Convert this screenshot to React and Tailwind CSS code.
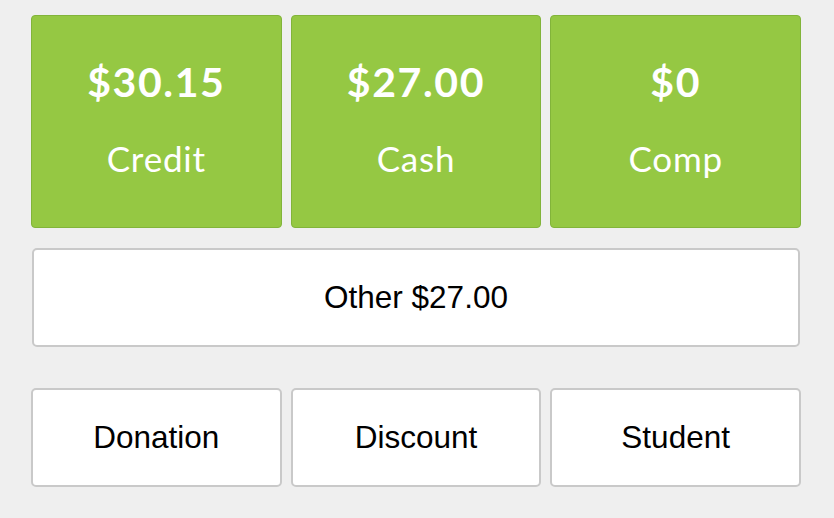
import React from 'react';

const tenders = [
    { amount: '$30.15', label: 'Credit' },
    { amount: '$27.00', label: 'Cash' },
    { amount: '$0', label: 'Comp' },
];

const extras = ['Donation', 'Discount', 'Student'];

const App = () => {
    return (
        <div className="min-h-[518px] w-full bg-[#efefef] pt-[15px] pl-[31px]">
            <div className="w-[770px]">
                <div className="grid grid-cols-3 gap-[9px]">
                    {tenders.map((t) => (
                        <button
                            key={t.label}
                            className="h-[213px] flex flex-col items-center rounded-[4px] border border-[#82b43a] bg-[#95c843] text-white font-['Lato',sans-serif]"
                        >
                            <span className="mt-[45px] text-[41px] leading-[41px] font-bold tracking-[1.6px]">{t.amount}</span>
                            <span className="mt-[39px] text-[35px] leading-[35px] tracking-[0.8px]">{t.label}</span>
                        </button>
                    ))}
                </div>

                <button className="mt-[20px] ml-[1px] w-[768px] h-[99px] rounded-[5px] border-2 border-[#c9c9c9] bg-white text-black text-[31.5px] font-['Liberation_Sans',Arial,sans-serif]">
                    Other $27.00
                </button>

                <div className="mt-[41px] grid grid-cols-3 gap-[9px]">
                    {extras.map((name) => (
                        <button
                            key={name}
                            className="h-[99px] rounded-[5px] border-2 border-[#c9c9c9] bg-white text-black text-[31.5px] font-['Liberation_Sans',Arial,sans-serif]"
                        >
                            {name}
                        </button>
                    ))}
                </div>
            </div>
        </div>
    );
};

export default App;
